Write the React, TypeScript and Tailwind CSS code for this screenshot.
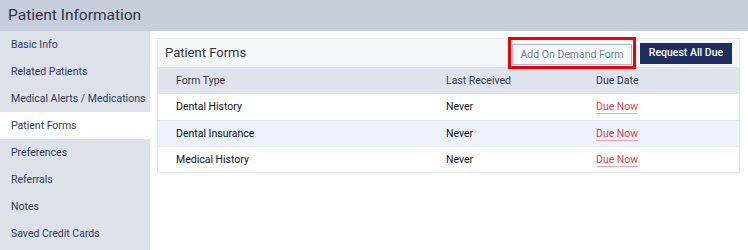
import React from 'react';

const navItems = [
  'Basic Info',
  'Related Patients',
  'Medical Alerts / Medications',
  'Patient Forms',
  'Preferences',
  'Referrals',
  'Notes',
  'Saved Credit Cards',
];

const forms = [
  { name: 'Dental History', last: 'Never', due: 'Due Now' },
  { name: 'Dental Insurance', last: 'Never', due: 'Due Now' },
  { name: 'Medical History', last: 'Never', due: 'Due Now' },
];

const App: React.FC = () => {
  return (
    <div className="w-[748px] h-[250px] overflow-hidden bg-white flex flex-col" style={{ fontFamily: 'Roboto, "Liberation Sans", sans-serif' }}>
      {/* Header */}
      <div className="h-[31px] shrink-0 bg-[#c6cedc] flex items-center pl-[8px]">
        <h1 className="text-[15.5px] text-[#2f3440] leading-none">Patient Information</h1>
      </div>

      <div className="flex flex-1 min-h-0">
        {/* Sidebar */}
        <div className="w-[150px] shrink-0 bg-[#dde1e9] flex flex-col">
          {navItems.map((item) => (
            <div
              key={item}
              className={`h-[27px] shrink-0 flex items-center pl-[11px] text-[10.5px] text-[#2c3d5a] whitespace-nowrap ${item === 'Patient Forms' ? 'bg-white' : ''}`}
            >
              {item}
            </div>
          ))}
        </div>

        {/* Content */}
        <div className="flex-1 pl-[7px] pr-[8px] pt-[7px]">
          <div className="border border-[#e2e6ed]">
            <div className="h-[28px] bg-[#f6f7f9] flex items-center justify-between pl-[7px] pr-[7px]">
              <span className="text-[13px] text-[#2f3440]">Patient Forms</span>
              <div className="flex items-center gap-[4px]">
                <div className="border-[3px] border-[#ee0000] p-px">
                  <button className="w-[120px] h-[21px] border border-[#a9b8c9] bg-[#f5f7fa] text-[10.5px] text-[#6c84a0] leading-none whitespace-nowrap">
                    Add On Demand Form
                  </button>
                </div>
                <button className="w-[92px] h-[21px] bg-[#1c2f5e] text-white text-[10.5px] font-medium leading-none whitespace-nowrap">
                  Request All Due
                </button>
              </div>
            </div>

            {/* Table header */}
            <div className="h-[27px] bg-[#dfe3ec] flex items-center pl-[18px] text-[10.5px] text-[#333a46]">
              <div className="w-[270px]">Form Type</div>
              <div className="w-[150px]">Last Received</div>
              <div>Due Date</div>
            </div>

            {forms.map((f, i) => (
              <div
                key={f.name}
                className={`h-[26px] flex items-center pl-[18px] text-[10.5px] text-[#111111] ${i > 0 ? 'border-t border-[#e2e6ed]' : ''} ${i === 1 ? 'bg-[#edf3fd]' : 'bg-white'}`}
              >
                <div className="w-[270px]">{f.name}</div>
                <div className="w-[150px]">{f.last}</div>
                <div className="text-[#d9434a] border-b border-[#eaa3a6] leading-[13px]">{f.due}</div>
              </div>
            ))}
          </div>
        </div>
      </div>
    </div>
  );
};

export default App;
